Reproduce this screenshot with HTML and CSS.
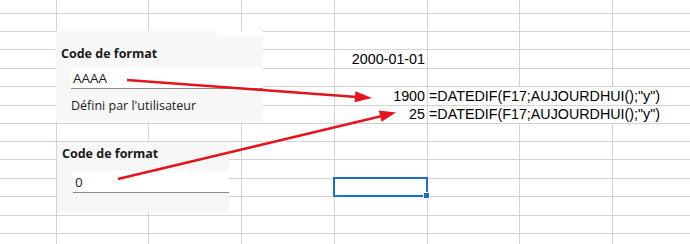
FILE: index.html
```html
<!DOCTYPE html>
<html lang="fr">
<head>
    <meta charset="UTF-8">
    <title>Code de format</title>
    <link rel="stylesheet" href="styles.css">
</head>
<body>
    <div class="sheet">
        <div class="row first"><i></i><i></i><i></i><i></i><i></i><i></i><i></i><i></i></div>
        <div class="row"><i></i><i></i><i></i><i></i><i></i><i></i><i></i><i></i></div>
        <div class="row"><i></i><i></i><i></i><i></i><i></i><i></i><i></i><i></i></div>
        <div class="row tall"><i></i><i></i><i></i><i></i><i class="num">2000-01-01</i><i></i><i></i><i></i></div>
        <div class="row"><i></i><i></i><i></i><i></i><i></i><i></i><i></i><i></i></div>
        <div class="row"><i></i><i></i><i></i><i></i><i class="num">1900</i><i class="formula">=DATEDIF(F17;AUJOURDHUI();"y")</i></div>
        <div class="row tall"><i></i><i></i><i></i><i></i><i class="num">25</i><i class="formula">=DATEDIF(F17;AUJOURDHUI();"y")</i></div>
        <div class="row"><i></i><i></i><i></i><i></i><i></i><i></i><i></i><i></i></div>
        <div class="row"><i></i><i></i><i></i><i></i><i></i><i></i><i></i><i></i></div>
        <div class="row tall"><i></i><i></i><i></i><i></i><i></i><i></i><i></i><i></i></div>
        <div class="row"><i></i><i></i><i></i><i></i><i class="selected"></i><i></i><i></i><i></i></div>
        <div class="row tall"><i></i><i></i><i></i><i></i><i></i><i></i><i></i><i></i></div>
        <div class="row"><i></i><i></i><i></i><i></i><i></i><i></i><i></i><i></i></div>
        <div class="row"><i></i><i></i><i></i><i></i><i></i><i></i><i></i><i></i></div>

        <!-- pasted dialog snippets -->
        <div class="snip snip-top">
            <div class="strip"></div>
            <div class="snip-title">Code de format</div>
            <div class="field">AAAA</div>
            <div class="snip-note">Défini par l'utilisateur</div>
        </div>
        <div class="snip snip-bottom">
            <div class="snip-title">Code de format</div>
            <div class="field">0</div>
        </div>

        <svg class="arrows" width="690" height="244" viewBox="0 0 690 244">
            <line x1="127" y1="80" x2="357" y2="97" />
            <polygon points="372,98 354.6,102.3 355.4,91.3" />
            <line x1="118" y1="179" x2="382" y2="116" />
            <polygon points="396,112.5 381.6,121.8 378.8,110.5" />
        </svg>
    </div>
</body>
</html>
```

FILE: styles.css
```css
body {
    margin: 0;
    background-color: #fff;
    overflow: hidden;
    font-family: "Liberation Sans", Arial, sans-serif;
    color: #000;
}

.sheet {
    position: relative;
    width: 690px;
    height: 244px;
    overflow: hidden;
}

.row {
    display: grid;
    grid-template-columns: 57px 92px 93px 93px 93px 92px 93px 93px;
    height: 18px;
}

.row.first {
    height: 14px;
}

.row.tall {
    height: 19px;
}

.row i {
    display: block;
    box-sizing: border-box;
    border-right: 1px solid #d3d3d3;
    border-bottom: 1px solid #d3d3d3;
    font-style: normal;
    font-size: 14.3px;
    line-height: 18px;
    white-space: nowrap;
}

.row i.num {
    text-align: right;
    padding-right: 2px;
}

.row i.formula {
    grid-column: span 3;
    padding-left: 1px;
}

.row i.selected {
    position: relative;
}

.row i.selected::before {
    content: "";
    position: absolute;
    left: -2px;
    top: -2px;
    right: -1px;
    bottom: -1px;
    border: 2px solid #1a6ed2;
}

.row i.selected::after {
    content: "";
    position: absolute;
    right: -3px;
    bottom: -3px;
    width: 5px;
    height: 5px;
    background-color: #1a6ed2;
    border: 1px solid #fff;
}

.snip {
    position: absolute;
    background-color: #f7f7f7;
    font-family: "Open Sans", "Noto Sans", sans-serif;
    color: #1b1b1b;
    box-sizing: border-box;
}

.snip-top {
    left: 56px;
    top: 31px;
    width: 207px;
    height: 91px;
    padding: 14px 0 0 5px;
}

.snip-bottom {
    left: 57px;
    top: 142px;
    width: 172px;
    height: 70px;
    padding: 3px 0 0 5px;
}

.strip {
    position: absolute;
    right: 0;
    top: 0;
    width: 46px;
    height: 5px;
    background-color: #fff;
}

.snip-title {
    font-size: 12.5px;
    font-weight: bold;
    line-height: 18px;
}

.field {
    box-sizing: border-box;
    height: 22px;
    margin: 4px 0 0 10px;
    padding: 0 2px;
    background-color: #fff;
    border-bottom: 1px solid #8a8a8a;
    font-size: 13.5px;
    line-height: 22px;
}

.snip-bottom .field {
    margin: 8px 0 0 11px;
}

.snip-note {
    margin: 8px 0 0 10px;
    font-size: 12.5px;
    line-height: 18px;
}

.arrows {
    position: absolute;
    left: 0;
    top: 0;
    pointer-events: none;
}

.arrows line {
    stroke: #e5131b;
    stroke-width: 2.4;
}

.arrows polygon {
    fill: #e5131b;
}
```
